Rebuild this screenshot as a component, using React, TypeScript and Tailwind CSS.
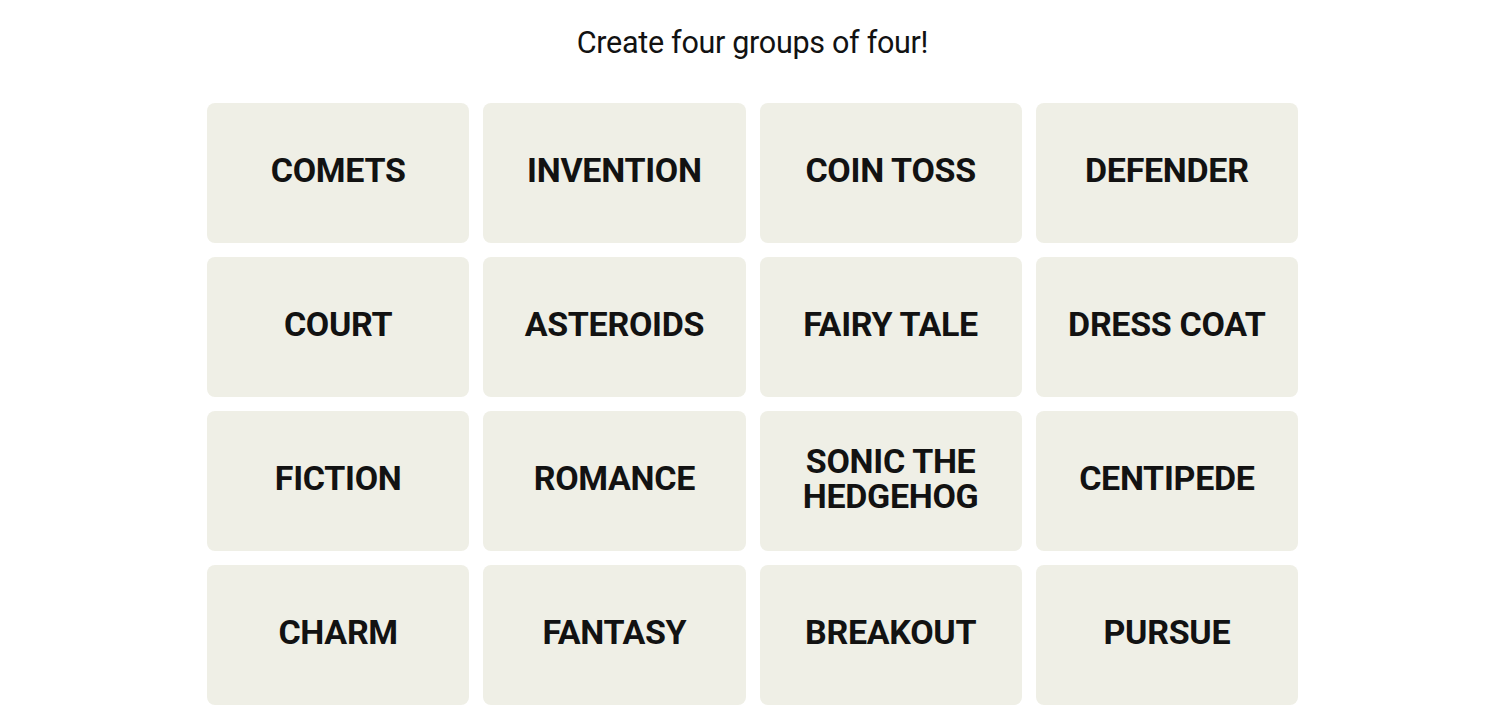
const words = [
  "COMETS",
  "INVENTION",
  "COIN TOSS",
  "DEFENDER",
  "COURT",
  "ASTEROIDS",
  "FAIRY TALE",
  "DRESS COAT",
  "FICTION",
  "ROMANCE",
  "SONIC THE HEDGEHOG",
  "CENTIPEDE",
  "CHARM",
  "FANTASY",
  "BREAKOUT",
  "PURSUE",
];

const App = () => {
  return (
    <div className="min-h-screen bg-white pl-[5px] font-['Roboto',sans-serif] text-[#121212]">
      <div className="flex flex-col items-center">
        <h2 className="pt-[23px] pb-[40px] text-[30.5px] leading-[40px] font-normal tracking-[-0.3px]">
          Create four groups of four!
        </h2>
        <div className="grid w-[1091px] grid-cols-4 gap-x-[14px] gap-y-[14px]">
          {words.map((w) => (
            <button
              key={w}
              className="flex h-[140px] items-center justify-center rounded-[8px] bg-[#efefe6] px-6 pb-[5px] text-center text-[34px] leading-[35px] font-bold tracking-[-0.3px]"
            >
              <span className="w-[200px]">{w}</span>
            </button>
          ))}
        </div>
      </div>
    </div>
  );
};

export default App;
